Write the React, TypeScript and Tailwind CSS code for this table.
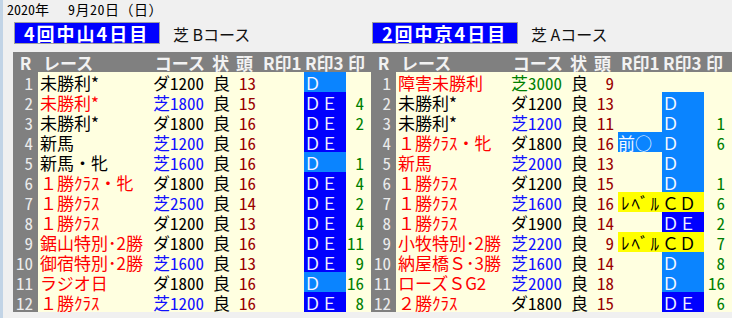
type Kind = "dark" | "light" | "yellow";

type Row = {
  name: string;
  red?: boolean;
  surf: "ダ" | "芝";
  dist: string;
  green?: boolean;
  heads: string;
  r1?: [string, Kind];
  r3?: [string, Kind];
  mark?: string;
};

const nakayama: Row[] = [
  { name: "未勝利*", surf: "ダ", dist: "1200", heads: "13", r3: ["Ｄ", "light"] },
  { name: "未勝利*", red: true, surf: "芝", dist: "1800", heads: "15", r3: ["ＤＥ", "dark"], mark: "4" },
  { name: "未勝利*", surf: "ダ", dist: "1800", heads: "16", r3: ["ＤＥ", "dark"], mark: "2" },
  { name: "新馬", surf: "芝", dist: "1200", heads: "16", r3: ["ＤＥ", "dark"] },
  { name: "新馬・牝", surf: "芝", dist: "1600", heads: "16", r3: ["Ｄ", "light"], mark: "1" },
  { name: "１勝ｸﾗｽ・牝", red: true, surf: "ダ", dist: "1800", heads: "16", r3: ["ＤＥ", "dark"], mark: "4" },
  { name: "１勝ｸﾗｽ", red: true, surf: "芝", dist: "2500", heads: "14", r3: ["ＤＥ", "dark"], mark: "2" },
  { name: "１勝ｸﾗｽ", red: true, surf: "ダ", dist: "1200", heads: "13", r3: ["ＤＥ", "dark"], mark: "4" },
  { name: "鋸山特別･2勝", red: true, surf: "ダ", dist: "1800", heads: "16", r3: ["ＤＥ", "dark"], mark: "11" },
  { name: "御宿特別･2勝", red: true, surf: "芝", dist: "1600", heads: "13", r3: ["ＤＥ", "dark"], mark: "9" },
  { name: "ラジオ日", red: true, surf: "ダ", dist: "1800", heads: "16", r3: ["Ｄ", "light"], mark: "16" },
  { name: "１勝ｸﾗｽ", red: true, surf: "芝", dist: "1200", heads: "16", r3: ["ＤＥ", "dark"], mark: "8" },
];

const chukyo: Row[] = [
  { name: "障害未勝利", red: true, surf: "芝", dist: "3000", green: true, heads: "9" },
  { name: "未勝利*", surf: "ダ", dist: "1200", heads: "13", r3: ["Ｄ", "light"] },
  { name: "未勝利*", surf: "芝", dist: "1200", heads: "11", r3: ["Ｄ", "light"], mark: "1" },
  { name: "１勝ｸﾗｽ・牝", red: true, surf: "ダ", dist: "1800", heads: "16", r1: ["前○", "light"], r3: ["Ｄ", "light"], mark: "6" },
  { name: "新馬", red: true, surf: "芝", dist: "2000", heads: "13", r3: ["Ｄ", "light"] },
  { name: "１勝ｸﾗｽ", red: true, surf: "ダ", dist: "1200", heads: "15", r3: ["Ｄ", "light"], mark: "1" },
  { name: "１勝ｸﾗｽ", red: true, surf: "芝", dist: "1600", heads: "16", r1: ["ﾚﾍﾞﾙ", "yellow"], r3: ["ＣＤ", "yellow"], mark: "6" },
  { name: "１勝ｸﾗｽ", red: true, surf: "ダ", dist: "1900", heads: "14", r3: ["ＤＥ", "dark"], mark: "2" },
  { name: "小牧特別･2勝", red: true, surf: "芝", dist: "2200", heads: "9", r1: ["ﾚﾍﾞﾙ", "yellow"], r3: ["ＣＤ", "yellow"], mark: "7" },
  { name: "納屋橋Ｓ･3勝", red: true, surf: "芝", dist: "1600", heads: "14", r3: ["Ｄ", "light"], mark: "8" },
  { name: "ローズＳG2", red: true, surf: "芝", dist: "2000", heads: "18", r3: ["Ｄ", "light"], mark: "16" },
  { name: "２勝ｸﾗｽ", red: true, surf: "ダ", dist: "1800", heads: "15", r3: ["ＤＥ", "dark"], mark: "6" },
];

const kindBg: Record<Kind, string> = {
  dark: "bg-[#0000ff] text-[#eeeeff]",
  light: "bg-[#0a84ff] text-[#f4f8ff]",
  yellow: "bg-[#ffff00] text-black",
};

const cell = "h-[20px] pt-[2px] leading-[18px] whitespace-nowrap shrink-0";
const half = "[font-feature-settings:'hwid']";

function Mark({ v, width }: { v?: [string, Kind]; width: string }) {
  if (!v) return <div className={`${cell} ${width}`} />;
  const spaced = v[0] === "ﾚﾍﾞﾙ" ? "pl-[3px] tracking-[2px]" : "";
  return <div className={`${cell} ${width} ${kindBg[v[1]]} ${spaced}`}>{v[0]}</div>;
}

function Table({ rows, last }: { rows: Row[]; last: string }) {
  return (
    <div className="text-[17px]">
      <div className="flex bg-[#808080] font-bold text-[#f2f2f2]">
        <div className={`${cell} w-[25px] text-center`}>R</div>
        <div className={`${cell} w-[112px] pl-[5px]`}>レース</div>
        <div className={`${cell} w-[56px] text-right pr-px`}>コース</div>
        <div className={`${cell} w-[30px] pl-[6px]`}>状</div>
        <div className={`${cell} w-[24px]`}>頭</div>
        <div className={`${cell} w-[44px] pl-[3px]`}>R印1</div>
        <div className={`${cell} w-[42px] pl-px`}>R印3</div>
        <div className={`${cell} ${last} pl-[2px]`}>印</div>
      </div>
      <div className="bg-[#ffffe0]">
        {rows.map((r, i) => (
          <div key={i} className="flex">
            <div className={`${cell} ${half} w-[25px] bg-[#808080] text-[#ececec] text-right pr-[5px]`}>{i + 1}</div>
            <div className={`${cell} w-[112px] pl-[2px] ${r.red ? "text-[#ff0000]" : "text-black"}`}>{r.name}</div>
            <div
              className={`${cell} w-[56px] text-right pr-[2px] ${
                r.green ? "text-[#008000]" : r.surf === "芝" ? "text-[#1010ff]" : "text-black"
              }`}
            >
              {r.surf}
              <span className={half}>{r.dist}</span>
            </div>
            <div className={`${cell} w-[30px] pl-[7px] text-black`}>良</div>
            <div className={`${cell} ${half} w-[24px] text-right pr-[4px] text-[#990000]`}>{r.heads}</div>
            <Mark v={r.r1} width="w-[44px]" />
            <Mark v={r.r3} width="w-[42px]" />
            <div className={`${cell} ${half} ${last} text-right pr-[7px] text-[#008000]`}>{r.mark}</div>
          </div>
        ))}
      </div>
    </div>
  );
}

function Label({ title, course }: { title: string; course: string }) {
  return (
    <div className="flex items-center h-[22px] ml-px">
      <div className="w-[146px] h-[22px] bg-[#0000ff] border border-[#a0a0a0] pl-[9px] text-white font-bold text-[18px] leading-[20px] tracking-[2px] whitespace-nowrap">
        {title}
      </div>
      <div className="ml-[13px] text-[16px] text-[#111] pt-[2px]">{course}</div>
    </div>
  );
}

export default function App() {
  return (
    <div className="w-[732px] h-[318px] bg-[#f0f0f0] border-l-[3px] border-[#c2d4e6] overflow-hidden font-['Noto_Sans_CJK_JP',sans-serif]">
      <div className="flex h-[22px] pl-[4px] text-[14px] leading-[18px] text-black whitespace-nowrap">
        <span>
          <span className={half}>2020</span>年
        </span>
        <span className="ml-[19px] tracking-[0.5px]">
          <span className={half}>9</span>月<span className={half}>20</span>日（日）
        </span>
      </div>
      <div className="flex pl-[10px]">
        <div className="w-[358px] shrink-0">
          <Label title="4回中山4日目" course="芝 Bコース" />
          <div className="h-[8px]" />
          <Table rows={nakayama} last="w-[25px]" />
        </div>
        <div className="flex-1">
          <Label title="2回中京4日目" course="芝 Aコース" />
          <div className="h-[8px]" />
          <Table rows={chukyo} last="flex-1" />
        </div>
      </div>
    </div>
  );
}
